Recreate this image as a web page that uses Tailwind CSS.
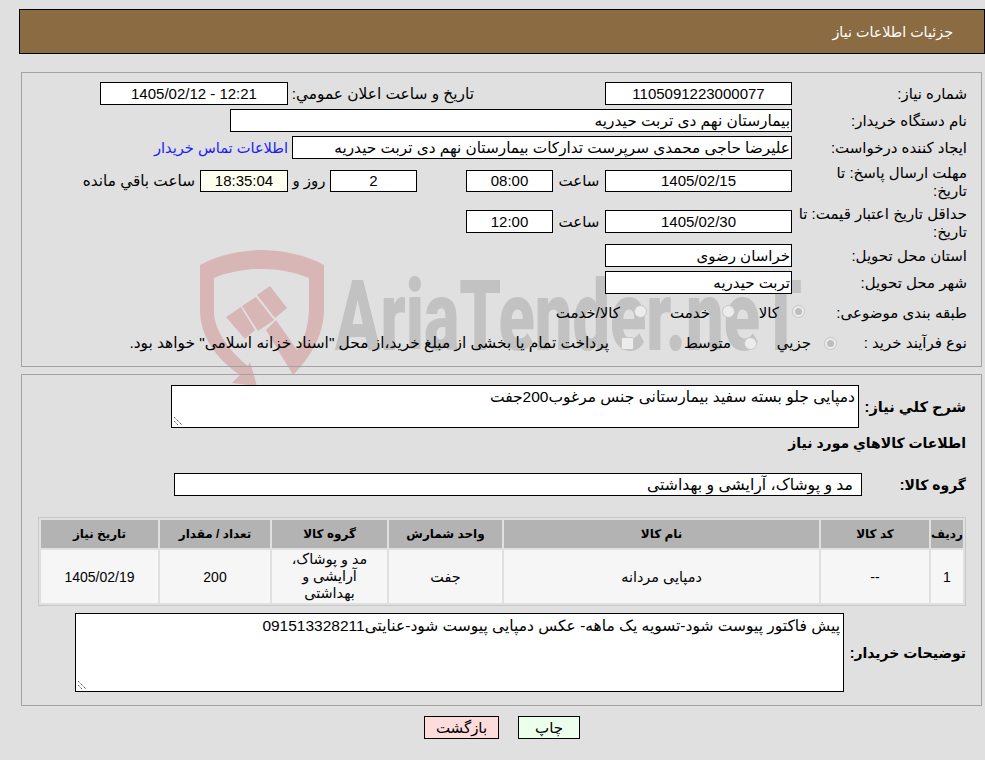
<!DOCTYPE html>
<html lang="fa" dir="rtl">
<head>
<meta charset="UTF-8">
<title>جزئیات اطلاعات نیاز</title>
<script src="https://cdn.jsdelivr.net/npm/@tailwindcss/browser@4"></script>
</head>
<body class="relative h-[760px] w-[985px] overflow-hidden bg-[#e0e0e0] font-['Liberation_Sans','DejaVu_Sans',sans-serif] text-[15px] leading-[18px] text-black">

<!-- watermark -->
<svg class="absolute left-[190px] top-[240px] z-0" width="150" height="150" viewBox="190 240 150 150">
  <path fill="#d8b6b6" d="M200 265 C238 245 286 245 324 265 V310 C324 335 310 358 293 375 L266 330 L276 320 L297 350 C305 338 309 325 309 305 V278 C280 266 243 266 214 278 V312 C214 330 230 352 248 366 L250 362 L257 386 L232 383 L240 375 C215 358 200 335 200 310 Z"/>
  <path fill="#d8b6b6" d="M226 317 L241 307 L255 330 L245 339 Z M242 306 L256 297 L274 320 L258 331 Z M257 295 L270 286 L287 308 L275 318 Z"/>
</svg>
<div class="absolute left-[335px] top-[242px] z-0 font-['Roboto',sans-serif] text-[98px] leading-[150px] font-black whitespace-nowrap text-[#c2c2c2] origin-left scale-x-[0.68]" dir="ltr">AriaTender.neT</div>

<header class="relative ml-[19px] mt-[9px] flex h-[45px] w-[966px] items-center border border-black bg-[#8b6b42] pr-[31px] text-[14.3px] text-white">جزئیات اطلاعات نیاز</header>

<section class="relative z-10 mr-[3px] mt-[18px] h-[295px] w-[961px] border border-[#a3a3a3] pt-[9px]">
  <div class="flex h-[23px] items-center">
    <div class="w-[189px] pr-[14px]">شماره نیاز:</div>
    <div class="flex h-[23px] w-[187px] items-center justify-center border border-black bg-white">1105091223000077</div>
    <div class="w-[317px] pr-[131px] text-[15.4px]">تاریخ و ساعت اعلان عمومي:</div>
    <div class="flex h-[23px] w-[188px] items-center justify-center border border-black bg-white" dir="ltr">1405/02/12 - 12:21</div>
  </div>
  <div class="mt-[4px] flex h-[23px] items-center">
    <div class="w-[189px] pr-[14px]">نام دستگاه خریدار:</div>
    <div class="flex h-[23px] w-[562px] items-center border border-black bg-white pr-[1px] text-[15.4px]">بیمارستان نهم دی تربت حیدریه</div>
  </div>
  <div class="mt-[4px] flex h-[23px] items-center">
    <div class="w-[189px] pr-[14px]">ایجاد کننده درخواست:</div>
    <div class="flex h-[23px] w-[500px] items-center border border-black bg-white pr-[1px] text-[15.3px]">علیرضا حاجی محمدی سرپرست تدارکات بیمارستان نهم دی تربت حیدریه</div>
    <div class="mr-[4px] text-[14.6px] text-[#1a1aff]">اطلاعات تماس خریدار</div>
  </div>
  <div class="mt-[5px] flex h-[36px] items-start">
    <div class="w-[189px] pr-[14px]">مهلت ارسال پاسخ: تا<br>تاریخ:</div>
    <div class="mt-[6px] flex h-[22px] w-[187px] items-center justify-center border border-black bg-white">1405/02/15</div>
    <div class="mt-[6px] flex h-[22px] w-[52px] items-center justify-center">ساعت</div>
    <div class="mt-[6px] flex h-[22px] w-[87px] items-center justify-center border border-black bg-white">08:00</div>
    <div class="mt-[6px] w-[49px]"></div>
    <div class="mt-[6px] flex h-[22px] w-[87px] items-center justify-center border border-black bg-white">2</div>
    <div class="mt-[6px] flex h-[22px] w-[42px] items-center justify-center">روز و</div>
    <div class="mt-[6px] flex h-[22px] w-[88px] items-center justify-center border border-black bg-[#fffff0]">18:35:04</div>
    <div class="mt-[6px] flex h-[22px] items-center pr-[5px] text-[15.3px]">ساعت باقي مانده</div>
  </div>
  <div class="mt-[5px] flex h-[36px] items-start">
    <div class="w-[189px] pr-[14px]">حداقل تاریخ اعتبار قیمت: تا<br>تاریخ:</div>
    <div class="mt-[5px] flex h-[23px] w-[187px] items-center justify-center border border-black bg-white">1405/02/30</div>
    <div class="mt-[5px] flex h-[23px] w-[52px] items-center justify-center">ساعت</div>
    <div class="mt-[5px] flex h-[23px] w-[87px] items-center justify-center border border-black bg-white">12:00</div>
  </div>
  <div class="mt-[3px] flex h-[23px] items-center">
    <div class="w-[189px] pr-[14px]">استان محل تحویل:</div>
    <div class="flex h-[23px] w-[187px] items-center border border-black bg-white pr-[1px]">خراسان رضوی</div>
  </div>
  <div class="mt-[4px] flex h-[23px] items-center">
    <div class="w-[189px] pr-[14px]">شهر محل تحویل:</div>
    <div class="flex h-[23px] w-[187px] items-center border border-black bg-white pr-[1px]">تربت حیدریه</div>
  </div>
  <div class="mt-[8px] flex h-[22px] items-center">
    <div class="w-[176px] pr-[14px]">طبقه بندی موضوعی:</div>
    <div class="flex w-[70px] items-center gap-[13px]">
      <span class="mb-[3px] flex size-[13px] items-center justify-center rounded-full border border-[#c6c6c6] bg-[#ececec]"><span class="size-[7px] rounded-full bg-[#bdbdbd]"></span></span><span>کالا</span>
    </div>
    <div class="flex w-[88px] items-center gap-[12px]"><span class="mb-[3px] size-[13px] rounded-full border border-[#c6c6c6] bg-[#ececec]"></span><span>خدمت</span></div>
    <div class="flex items-center gap-[14px]"><span class="mb-[3px] size-[13px] rounded-full border border-[#c6c6c6] bg-[#ececec]"></span><span>کالا/خدمت</span></div>
  </div>
  <div class="mt-[8px] flex h-[22px] items-center">
    <div class="w-[144px] pr-[14px]">نوع فرآیند خرید :</div>
    <div class="flex w-[80px] items-center gap-[13px]">
      <span class="flex size-[13px] items-center justify-center rounded-full border border-[#c6c6c6] bg-[#ececec]"><span class="size-[7px] rounded-full bg-[#bdbdbd]"></span></span><span>جزیي</span>
    </div>
    <div class="flex w-[123px] items-center gap-[13px]"><span class="size-[13px] rounded-full border border-[#c6c6c6] bg-[#ececec]"></span><span>متوسط</span></div>
    <div class="flex items-center gap-[12px]"><span class="size-[13px] rounded-[2px] border border-[#c6c6c6] bg-[#ececec]"></span><span class="text-[15.4px]">پرداخت تمام یا بخشی از مبلغ خرید،از محل "اسناد خزانه اسلامی" خواهد بود.</span></div>
  </div>
</section>

<section class="relative z-10 mr-[3px] mt-[7px] h-[332px] w-[961px] border border-[#a3a3a3] pt-[10px]">
  <div class="flex h-[43px] items-center">
    <div class="w-[122px] pr-[15px] text-[14.6px] font-bold">شرح کلي نیاز:</div>
    <div class="relative h-[43px] w-[688px] border border-black bg-white pr-[3px] pt-[2px] text-[15.5px]">دمپایی جلو بسته سفید بیمارستانی جنس مرغوب200جفت
      <svg class="absolute bottom-[1px] left-[1px]" width="10" height="10" viewBox="0 0 10 10"><path d="M1 1 L9 9 M1 5 L5 9" stroke="#555" stroke-dasharray="1.4 .7" fill="none"/></svg>
    </div>
  </div>
  <div class="mt-[6px] h-[18px] pr-[15px] text-[14px] font-bold">اطلاعات کالاهاي مورد نیاز</div>
  <div class="mt-[21px] flex h-[23px] items-center">
    <div class="w-[119px] pr-[15px] text-[14px] font-bold">گروه کالا:</div>
    <div class="flex h-[23px] w-[688px] items-center border border-black bg-white pr-[8px] text-[15.7px]">مد و پوشاک، آرایشی و بهداشتی</div>
  </div>
  <table class="mt-[21px] mr-[15px] w-[928px] table-fixed border-separate border-spacing-[2px] border border-[#c8c8c8] text-[14px]">
    <thead>
      <tr class="h-[28px] bg-[#b3b3b3] text-[12px] font-bold">
        <th class="w-[32px]">ردیف</th><th class="w-[108px]">کد کالا</th><th class="w-[315px]">نام کالا</th><th class="w-[113px]">واحد شمارش</th><th class="w-[115px]">گروه کالا</th><th class="w-[110px]">تعداد / مقدار</th><th class="w-[117px]">تاریخ نیاز</th>
      </tr>
    </thead>
    <tbody>
      <tr class="h-[53px] bg-[#f6f6f6] text-center">
        <td>1</td><td>--</td><td class="text-[14.4px]">دمپایی مردانه</td><td class="text-[14.4px]">جفت</td><td class="px-[8px] text-[14.4px] leading-[17px]">مد و پوشاک، آرایشی و بهداشتی</td><td>200</td><td>1405/02/19</td>
      </tr>
    </tbody>
  </table>
  <div class="mt-[7px] flex h-[79px] items-center">
    <div class="w-[137px] pr-[15px] text-[14px] font-bold">توضیحات خریدار:</div>
    <div class="relative h-[79px] w-[769px] border border-black bg-white pr-[3px] pt-[3px] text-[15.5px]">پیش فاکتور پیوست شود-تسویه یک ماهه- عکس دمپایی پیوست شود-عنایتی091513328211
      <svg class="absolute bottom-[1px] left-[1px]" width="10" height="10" viewBox="0 0 10 10"><path d="M1 1 L9 9 M1 5 L5 9" stroke="#555" stroke-dasharray="1.4 .7" fill="none"/></svg>
    </div>
  </div>
</section>

<div class="relative z-10 mt-[10px] mr-[405px] flex gap-[19px]">
  <button class="h-[23px] w-[62px] border border-black bg-[#ebffeb]">چاپ</button>
  <button class="h-[23px] w-[75px] border border-black bg-[#ffdcdc]">بازگشت</button>
</div>
</body>
</html>
